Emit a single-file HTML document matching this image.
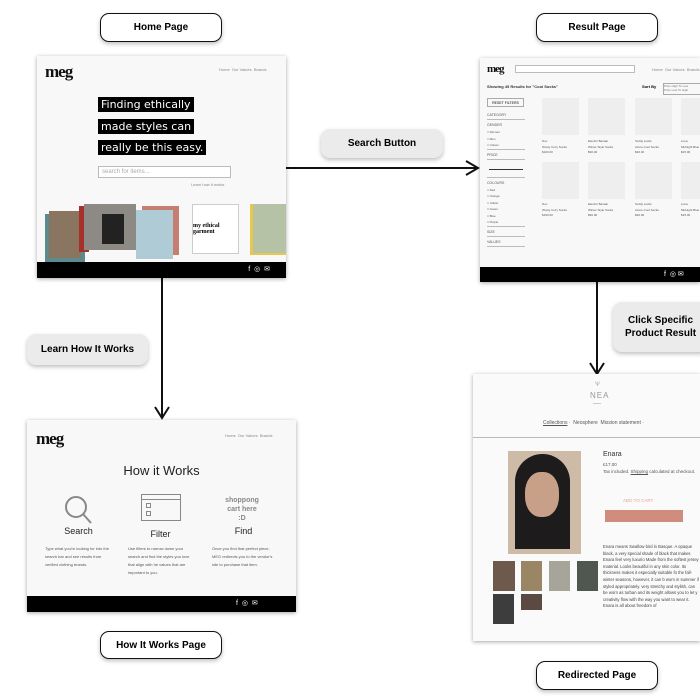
<!DOCTYPE html>
<html><head><meta charset="utf-8"><style>
*{margin:0;padding:0;box-sizing:border-box}
body{width:700px;height:698px;background:#fff;position:relative;overflow:hidden;font-family:"Liberation Sans",sans-serif}
.a{position:absolute}
.lbl{position:absolute;border:1.5px solid #111;border-radius:9px;background:#fff;font-weight:bold;font-size:10px;display:flex;align-items:center;justify-content:center;box-shadow:0 2px 4px rgba(0,0,0,.25)}
.pill{position:absolute;background:#ebebeb;border-radius:9px;font-weight:bold;font-size:10px;display:flex;align-items:center;justify-content:center;text-align:center;box-shadow:0 2px 4px rgba(0,0,0,.25);line-height:13px}
.scr{position:absolute;background:#f8f8f8;box-shadow:0 1px 4px rgba(0,0,0,.35);overflow:hidden}
.logo{font-family:"Liberation Serif",serif;font-weight:bold;letter-spacing:-1px;color:#111}
.nav{font-size:4px;color:#888}
.foot{position:absolute;left:0;right:0;bottom:0;background:#000}
.hl{background:#000;color:#fff;font-size:11px;line-height:15px;padding:0 3px;display:table;margin-bottom:6.5px}
.ph{position:absolute;background:#eee}
.tx{font-size:3px;color:#555}
.rl{font-size:3.5px;color:#555;border-bottom:1px solid #bbb;padding:3px 0 2px}
</style></head><body>

<div class="lbl" style="left:100px;top:13px;width:122px;height:29px">Home Page</div>
<div class="lbl" style="left:536px;top:13px;width:122px;height:29px">Result Page</div>
<div class="lbl" style="left:100px;top:631px;width:122px;height:28px">How It Works Page</div>
<div class="lbl" style="left:536px;top:661px;width:122px;height:29px">Redirected Page</div>

<div class="pill" style="left:321px;top:129px;width:122px;height:29px">Search Button</div>
<div class="pill" style="left:27px;top:334px;width:121px;height:31px">Learn How It Works</div>
<div class="pill" style="left:613px;top:302px;width:95px;height:50px">Click Specific<br>Product Result</div>

<svg class="a" style="left:0;top:0" width="700" height="698">
<g stroke="#111" fill="none" stroke-width="2">
<path d="M286 168 L476 168"/><path d="M466 161 L478 168 L466 175"/>
<path d="M162 278 L162 416"/><path d="M155 407 L162 418 L169 407"/>
<path d="M597 282 L597 372"/><path d="M590 363 L597 374 L604 363"/>
</g></svg>

<!-- Home -->
<div class="scr" style="left:37px;top:56px;width:249px;height:222px">
<div class="a logo" style="left:8px;top:6px;font-size:17px">meg</div>
<div class="a nav" style="left:182px;top:11px">Home&nbsp; Our Values&nbsp; Brands</div>
<div class="a" style="left:61px;top:41px;width:140px;font-family:'DejaVu Sans',sans-serif">
<div class="hl">Finding ethically</div><div class="hl">made styles can</div><div class="hl">really be this easy.</div></div>
<div class="a" style="left:61px;top:110px;width:133px;height:12px;border:1px solid #bbb;background:#fff;font-size:6px;color:#aaa;padding:2px 3px">search for items...</div>
<div class="a nav" style="left:154px;top:126px">Learn how it works</div>
<div class="a" style="left:8px;top:158px;width:40px;height:48px;background:#5d8a8c"></div>
<div class="a" style="left:12px;top:155px;width:32px;height:47px;background:#8a7560"></div>
<div class="a" style="left:42px;top:150px;width:10px;height:46px;background:#a8302a"></div>
<div class="a" style="left:47px;top:148px;width:52px;height:46px;background:#8d8a86"></div>
<div class="a" style="left:65px;top:158px;width:22px;height:30px;background:#222"></div>
<div class="a" style="left:105px;top:150px;width:37px;height:49px;background:#c47e72"></div>
<div class="a" style="left:99px;top:154px;width:37px;height:49px;background:#aecbd6"></div>
<div class="a" style="left:155px;top:148px;width:47px;height:50px;background:#fff;border:1px solid #ccc;font-family:'Liberation Serif',serif;font-size:6px;font-weight:bold;display:flex;align-items:center;justify-content:center">my ethical garment</div>
<div class="a" style="left:213px;top:148px;width:36px;height:51px;background:#e8c84c"></div>
<div class="a" style="left:216px;top:148px;width:33px;height:49px;background:#b5c2a5"></div>
<div class="foot" style="height:16px"><div class="a" style="right:16px;top:3px;color:#fff;font-size:7px">f &nbsp;◎ &nbsp;✉</div></div>
</div>

<!-- Result -->
<div class="scr" style="left:480px;top:58px;width:220px;height:224px">
<div class="a logo" style="left:7px;top:5px;font-size:11px">meg</div>
<div class="a" style="left:35px;top:7px;width:120px;height:8px;border:1px solid #bbb;background:#fff"></div>
<div class="a nav" style="left:172px;top:9px">Home&nbsp; Our Values&nbsp; Brands</div>
<div class="a" style="left:7px;top:26px;font-size:4px;font-weight:bold;color:#333">Showing 45 Results for "Cool Socks"</div>
<div class="a" style="left:162px;top:26px;font-size:4px;font-weight:bold">Sort By</div>
<div class="a" style="left:183px;top:25px;width:40px;height:12px;border:1px solid #aaa;font-size:3px;color:#777">Price High To Low<br>Price Low To High</div>
<div class="a" style="left:7px;top:40px;width:37px;height:9px;border:1px solid #aaa;font-size:3.5px;text-align:center;line-height:8px">RESET FILTERS</div>
<div class="a" style="left:7px;top:52px;width:38px">
<div class="rl">CATEGORY</div><div class="rl" style="border:0">GENDER</div>
<div class="tx" style="line-height:6.5px">□ Women<br>□ Men<br>□ Unisex</div>
<div class="rl" style="border-top:1px solid #bbb">PRICE</div>
<div style="height:18px;border-bottom:1px solid #bbb;position:relative"><div class="a" style="left:2px;top:9px;width:34px;border-top:1px solid #333"></div></div>
<div class="rl" style="border:0">COLOURS</div>
<div class="tx" style="line-height:6.5px;border-bottom:1px solid #bbb">□ Red<br>□ Orange<br>□ Yellow<br>□ Green<br>□ Blue<br>□ Purple</div>
<div class="rl">SIZE</div><div class="rl">VALUES</div></div>
<div class="ph" style="left:62px;top:40px;width:37px;height:37px"></div>
<div class="ph" style="left:108px;top:40px;width:37px;height:37px"></div>
<div class="ph" style="left:155px;top:40px;width:37px;height:37px"></div>
<div class="ph" style="left:201px;top:40px;width:37px;height:37px"></div>
<div class="ph" style="left:62px;top:104px;width:37px;height:37px"></div>
<div class="ph" style="left:108px;top:104px;width:37px;height:37px"></div>
<div class="ph" style="left:155px;top:104px;width:37px;height:37px"></div>
<div class="ph" style="left:201px;top:104px;width:37px;height:37px"></div>
<div class="a tx" style="left:62px;top:81px;line-height:5.5px">Nov<br>Wooly Cozy Socks<br>$100.00</div>
<div class="a tx" style="left:108px;top:81px;line-height:5.5px">Electric Bazaar<br>Winter Style Socks<br>$90.00</div>
<div class="a tx" style="left:155px;top:81px;line-height:5.5px">Teddy Locks<br>Azure Cool Socks<br>$30.00</div>
<div class="a tx" style="left:201px;top:81px;line-height:5.5px">Luna<br>Midnight Blue<br>$15.00</div>
<div class="a tx" style="left:62px;top:144px;line-height:5.5px">Nov<br>Wooly Cozy Socks<br>$100.00</div>
<div class="a tx" style="left:108px;top:144px;line-height:5.5px">Electric Bazaar<br>Winter Style Socks<br>$90.00</div>
<div class="a tx" style="left:155px;top:144px;line-height:5.5px">Teddy Locks<br>Azure Cool Socks<br>$30.00</div>
<div class="a tx" style="left:201px;top:144px;line-height:5.5px">Luna<br>Midnight Blue<br>$15.00</div>
<div class="foot" style="height:15px"><div class="a" style="left:184px;top:3px;color:#fff;font-size:7px">f &nbsp;◎ ✉</div></div>
</div>

<!-- How it works -->
<div class="scr" style="left:27px;top:420px;width:269px;height:192px">
<div class="a logo" style="left:9px;top:9px;font-size:17px">meg</div>
<div class="a nav" style="left:198px;top:13px">Home&nbsp; Our Values&nbsp; Brands</div>
<div class="a" style="left:0;width:269px;top:43px;text-align:center;font-size:13px;color:#222">How it Works</div>
<svg class="a" style="left:36px;top:74px" width="30" height="32"><circle cx="13" cy="13" r="10" stroke="#888" stroke-width="2" fill="none"/><path d="M20 20 L28 29" stroke="#888" stroke-width="2"/></svg>
<div class="a" style="left:114px;top:74px;width:40px;height:27px;border:1.5px solid #888"><div style="border-bottom:1px solid #888;height:5px"></div><div style="margin:3px 4px;border:1px solid #888;width:5px;height:5px"></div><div style="margin:2px 4px;border:1px solid #888;width:5px;height:5px"></div></div>
<div class="a" style="left:185px;top:76px;width:60px;text-align:center;font-size:7px;font-weight:bold;color:#888;line-height:9px">shoppong<br>cart here<br>:D</div>
<div class="a" style="left:24px;top:106px;width:55px;text-align:center;font-size:9px;color:#222">Search</div>
<div class="a" style="left:106px;top:109px;width:55px;text-align:center;font-size:9px;color:#222">Filter</div>
<div class="a" style="left:189px;top:106px;width:55px;text-align:center;font-size:9px;color:#222">Find</div>
<div class="a tx" style="left:18px;top:125px;width:65px;font-size:4px;line-height:8px">Type what you're looking for into the search bar and see results from verified clothing brands.</div>
<div class="a tx" style="left:101px;top:125px;width:65px;font-size:4px;line-height:8px">Use filters to narrow down your search and find the styles you love that align with he values that are important to you.</div>
<div class="a tx" style="left:185px;top:125px;width:65px;font-size:4px;line-height:8px">Once you find that perfect piece, MEG redirects you to the vendor's site to purchase that item.</div>
<div class="foot" style="height:16px"><div class="a" style="left:209px;top:3px;color:#fff;font-size:7px">f &nbsp;◎ &nbsp;✉</div></div>
</div>

<!-- Redirected -->
<div class="scr" style="left:473px;top:374px;width:227px;height:267px;background:#fafafa">
<div class="a" style="left:122px;top:8px;font-size:6px;color:#aaa">Ѱ</div>
<div class="a" style="left:117px;top:17px;font-size:8px;color:#999;letter-spacing:1px">NEA</div>
<div class="a" style="left:120px;top:29px;width:8px;border-top:1px solid #ccc"></div>
<div class="a" style="left:0;top:46px;width:227px;font-size:5px;color:#555;padding-left:70px"><u>Collections</u> · &nbsp;Neosphere&nbsp; Mission statement ·</div>
<div class="a" style="left:0;top:63px;width:227px;border-top:1px solid #bbb"></div>
<div class="a" style="left:35px;top:77px;width:73px;height:103px;background:#cdbba7"></div>
<div class="a" style="left:42px;top:80px;width:55px;height:95px;background:#1d1b1b;border-radius:30px 30px 0 0"></div>
<div class="a" style="left:52px;top:98px;width:34px;height:45px;background:#c8a088;border-radius:45%"></div>
<div class="a" style="left:130px;top:77px;font-size:7px;color:#333">Enara</div>
<div class="a tx" style="left:130px;top:87px;font-size:4.5px;line-height:7px;width:95px">£17.00<br>Tax included. <u>Shipping</u> calculated at checkout.</div>
<div class="a" style="left:150px;top:124px;font-size:4.5px;color:#e2a596">ADD TO CART</div>
<div class="a" style="left:132px;top:136px;width:78px;height:12px;background:#d08d7e"></div>
<div class="a tx" style="left:130px;top:170px;width:97px;font-size:4.2px;line-height:6.6px;color:#444">Enara means Swallow bird in Basque. A opaque black, a very special shade of black that makes Enara feel very luxurio Made from the softest jersey material. Looks beautiful in any skin color. Its thickness makes it especially suitable fo the fall-winter seasons, however, it can b worn in summer if styled appropriately. very stretchy and stylish, can be worn as turban and its weight allows you to let y creativity flow with the way you want to wear it. Enara is all about freedom of</div>
<div class="a" style="left:20px;top:187px;width:22px;height:30px;background:#6e5a4c"></div>
<div class="a" style="left:48px;top:187px;width:21px;height:30px;background:#9a8565"></div>
<div class="a" style="left:76px;top:187px;width:21px;height:30px;background:#a7a59a"></div>
<div class="a" style="left:104px;top:187px;width:21px;height:30px;background:#4f5750"></div>
<div class="a" style="left:20px;top:220px;width:21px;height:30px;background:#3d3d3d"></div>
<div class="a" style="left:48px;top:220px;width:21px;height:16px;background:#5a4a42"></div>
</div>
</body></html>
